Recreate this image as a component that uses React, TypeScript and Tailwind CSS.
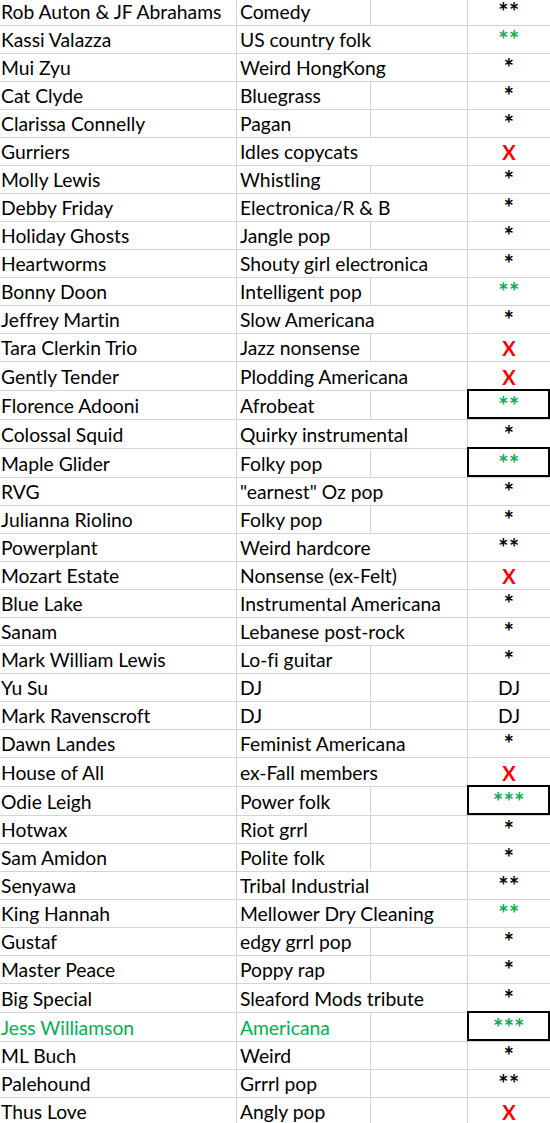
import React from "react";

type R = {
  n: string;
  g: string;
  r: string;
  c: "k" | "g" | "x" | "d";
  o?: boolean;
  t?: boolean;
  b?: boolean;
  green?: boolean;
};

const data: R[] = [
  { n: "Rob Auton & JF Abrahams", g: "Comedy", r: "**", c: "k" },
  { n: "Kassi Valazza", g: "US country folk", r: "**", c: "g", o: true },
  { n: "Mui Zyu", g: "Weird HongKong", r: "*", c: "k", o: true },
  { n: "Cat Clyde", g: "Bluegrass", r: "*", c: "k" },
  { n: "Clarissa Connelly", g: "Pagan", r: "*", c: "k" },
  { n: "Gurriers", g: "Idles copycats", r: "X", c: "x", o: true },
  { n: "Molly Lewis", g: "Whistling", r: "*", c: "k" },
  { n: "Debby Friday", g: "Electronica/R & B", r: "*", c: "k", o: true },
  { n: "Holiday Ghosts", g: "Jangle pop", r: "*", c: "k" },
  { n: "Heartworms", g: "Shouty girl electronica", r: "*", c: "k", o: true },
  { n: "Bonny Doon", g: "Intelligent pop", r: "**", c: "g" },
  { n: "Jeffrey Martin", g: "Slow Americana", r: "*", c: "k", o: true },
  { n: "Tara Clerkin Trio", g: "Jazz nonsense", r: "X", c: "x" },
  { n: "Gently Tender", g: "Plodding Americana", r: "X", c: "x", o: true, t: true },
  { n: "Florence Adooni", g: "Afrobeat", r: "**", c: "g", t: true, b: true },
  { n: "Colossal Squid", g: "Quirky instrumental", r: "*", c: "k", o: true, t: true },
  { n: "Maple Glider", g: "Folky pop", r: "**", c: "g", t: true, b: true },
  { n: "RVG", g: "\"earnest\" Oz pop", r: "*", c: "k", o: true },
  { n: "Julianna Riolino", g: "Folky pop", r: "*", c: "k" },
  { n: "Powerplant", g: "Weird hardcore", r: "**", c: "k", o: true },
  { n: "Mozart Estate", g: "Nonsense (ex-Felt)", r: "X", c: "x", o: true },
  { n: "Blue Lake", g: "Instrumental Americana", r: "*", c: "k", o: true },
  { n: "Sanam", g: "Lebanese post-rock", r: "*", c: "k", o: true },
  { n: "Mark William Lewis", g: "Lo-fi guitar", r: "*", c: "k" },
  { n: "Yu Su", g: "DJ", r: "DJ", c: "d" },
  { n: "Mark Ravenscroft", g: "DJ", r: "DJ", c: "d" },
  { n: "Dawn Landes", g: "Feminist Americana", r: "*", c: "k", o: true },
  { n: "House of All", g: "ex-Fall members", r: "X", c: "x", o: true, t: true },
  { n: "Odie Leigh", g: "Power folk", r: "***", c: "g", t: true, b: true },
  { n: "Hotwax", g: "Riot grrl", r: "*", c: "k" },
  { n: "Sam Amidon", g: "Polite folk", r: "*", c: "k" },
  { n: "Senyawa", g: "Tribal Industrial", r: "**", c: "k", o: true },
  { n: "King Hannah", g: "Mellower Dry Cleaning", r: "**", c: "g", o: true },
  { n: "Gustaf", g: "edgy grrl pop", r: "*", c: "k" },
  { n: "Master Peace", g: "Poppy rap", r: "*", c: "k" },
  { n: "Big Special", g: "Sleaford Mods tribute", r: "*", c: "k", o: true, t: true },
  { n: "Jess Williamson", g: "Americana", r: "***", c: "g", t: true, b: true, green: true },
  { n: "ML Buch", g: "Weird", r: "*", c: "k" },
  { n: "Palehound", g: "Grrrl pop", r: "**", c: "k" },
  { n: "Thus Love", g: "Angly pop", r: "X", c: "x" },
];

function Rating({ r, c }: { r: string; c: R["c"] }) {
  if (c === "x") return <span className="font-bold text-[#ff0000] text-[20px]">X</span>;
  if (c === "d") return <span className="font-normal text-black">DJ</span>;
  return (
    <span
      className={`font-bold text-[24px] leading-[27px] tracking-[0.5px] ${
        c === "g" ? "text-[#00b050]" : "text-black"
      }`}
    >
      {r}
    </span>
  );
}

export default function App() {
  return (
    <div className="w-[550px] h-[1123px] overflow-hidden bg-white font-['Lato','Liberation_Sans',sans-serif] text-[19.3px] text-black [font-variant-ligatures:none]">
      <div className="-mt-[2px]">
        {data.map((d, i) => (
          <div
            key={i}
            className={`grid grid-cols-[237px_134px_97px_82px] ${d.t ? "h-[29px]" : "h-[28px]"}`}
          >
            <div
              className={`flex items-end border-b border-r border-[#d4d4d4] pl-[1px] leading-[26px] whitespace-nowrap ${
                d.green ? "text-[#00b050]" : ""
              }`}
            >
              {d.n}
            </div>
            <div
              className={`flex items-end border-b border-[#d4d4d4] pl-[3px] leading-[26px] whitespace-nowrap overflow-visible ${
                d.o ? "" : "border-r"
              } ${d.green ? "text-[#00b050]" : ""}`}
            >
              {d.g}
            </div>
            <div className="border-b border-r border-[#d4d4d4]" />
            <div className="relative flex items-end justify-center border-b border-[#d4d4d4] leading-[26px]">
              <Rating r={d.r} c={d.c} />
              {d.b && (
                <div className="absolute -top-[2px] -left-[1px] right-0 h-[30px] border-2 border-black" />
              )}
            </div>
          </div>
        ))}
      </div>
    </div>
  );
}
